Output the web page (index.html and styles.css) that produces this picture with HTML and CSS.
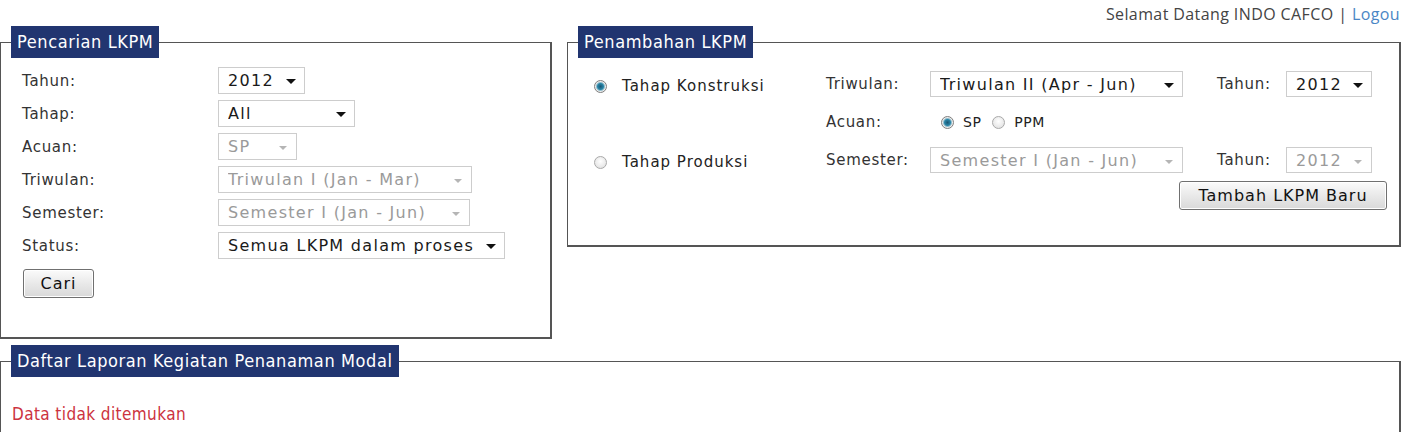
FILE: index.html
```html
<!DOCTYPE html>
<html lang="id">
<head>
    <meta charset="UTF-8">
    <title>LKPM</title>
    <link rel="stylesheet" href="styles.css">
</head>
<body>

    <div class="topbar">Selamat Datang INDO CAFCO | <a href="#" class="logout">Logou</a></div>

    <div class="panels">

        <!-- Pencarian -->
        <fieldset class="box box-search">
            <legend>Pencarian LKPM</legend>
            <div class="box-body">
                <div class="search-grid">
                    <span class="lbl">Tahun:</span>
                    <span class="dropdown w-87"><select><option>2012</option></select></span>

                    <span class="lbl">Tahap:</span>
                    <span class="dropdown w-137"><select><option>All</option></select></span>

                    <span class="lbl">Acuan:</span>
                    <span class="dropdown w-79 off"><select disabled><option>SP</option></select></span>

                    <span class="lbl">Triwulan:</span>
                    <span class="dropdown w-254 off"><select disabled><option>Triwulan I (Jan - Mar)</option></select></span>

                    <span class="lbl">Semester:</span>
                    <span class="dropdown w-252 off"><select disabled><option>Semester I (Jan - Jun)</option></select></span>

                    <span class="lbl">Status:</span>
                    <span class="dropdown w-287"><select><option>Semua LKPM dalam proses</option></select></span>
                </div>
                <button class="btn btn-cari">Cari</button>
            </div>
        </fieldset>

        <!-- Penambahan -->
        <fieldset class="box box-add">
            <legend>Penambahan LKPM</legend>
            <div class="box-body">
                <div class="add-grid">
                    <label class="stage"><input type="radio" name="tahap" checked> Tahap Konstruksi</label>
                    <span class="lbl">Triwulan:</span>
                    <span class="dropdown w-253"><select><option>Triwulan II (Apr - Jun)</option></select></span>
                    <span class="lbl lbl-year">Tahun:</span>
                    <span class="dropdown w-86"><select><option>2012</option></select></span>

                    <span></span>
                    <span class="lbl">Acuan:</span>
                    <span class="acuan">
                        <label><input type="radio" name="acuan" checked> SP</label>
                        <label><input type="radio" name="acuan"> PPM</label>
                    </span>
                    <span></span>
                    <span></span>

                    <label class="stage"><input type="radio" name="tahap"> Tahap Produksi</label>
                    <span class="lbl">Semester:</span>
                    <span class="dropdown w-253 off"><select disabled><option>Semester I (Jan - Jun)</option></select></span>
                    <span class="lbl lbl-year">Tahun:</span>
                    <span class="dropdown w-86 off"><select disabled><option>2012</option></select></span>
                </div>
                <div class="actions">
                    <button class="btn btn-add">Tambah LKPM Baru</button>
                </div>
            </div>
        </fieldset>

    </div>

    <!-- Daftar -->
    <fieldset class="box box-list">
        <legend>Daftar Laporan Kegiatan Penanaman Modal</legend>
        <div class="box-body">
            <p class="empty">Data tidak ditemukan</p>
        </div>
    </fieldset>

</body>
</html>
```

FILE: styles.css
```css
body {
    margin: 0;
    background-color: #fff;
    font-family: 'DejaVu Sans', Verdana, sans-serif;
    font-size: 15px;
    color: #333;
}

.topbar {
    height: 26px;
    width: 1400px;
    text-align: right;
    font-family: 'Open Sans', sans-serif;
    font-size: 16px;
    letter-spacing: 0.4px;
    line-height: 28px;
    color: #444;
    white-space: nowrap;
}

.logout {
    color: #4a86c5;
    text-decoration: none;
}

.panels {
    display: flex;
    gap: 15px;
    align-items: flex-start;
}

.box {
    margin: 0;
    padding: 0;
    border: 1px solid #555;
    border-right-width: 2px;
    border-bottom-width: 2px;
    box-sizing: border-box;
    min-width: 0;
}

.box legend {
    margin-left: 10px;
    padding: 0 6px;
    height: 32px;
    line-height: 32px;
    background-color: #213570;
    color: #fff;
    font-family: 'DejaVu Sans Condensed', 'DejaVu Sans', sans-serif;
    font-size: 18px;
    letter-spacing: 0.6px;
}

.box-search {
    width: 552px;
    height: 313px;
}

.box-add {
    width: 834px;
    height: 221px;
}

.box-list {
    width: 1401px;
    height: 140px;
    margin-top: 6px;
}

.lbl {
    font-size: 15px;
    letter-spacing: 0.7px;
    color: #333;
}

/* search form */
.box-search .box-body {
    padding: 9px 0 0 21px;
}

.search-grid {
    display: grid;
    grid-template-columns: 196px auto;
    grid-auto-rows: 27px;
    row-gap: 6px;
    align-items: center;
    justify-items: start;
}

/* dropdowns */
.dropdown {
    position: relative;
    display: inline-block;
    height: 27px;
}

.dropdown select {
    appearance: none;
    -webkit-appearance: none;
    width: 100%;
    height: 100%;
    margin: 0;
    padding: 0 0 0 9px;
    border: 1px solid #cdcdcd;
    border-radius: 0;
    background-color: #fff;
    font-family: 'DejaVu Sans', Verdana, sans-serif;
    font-size: 16px;
    letter-spacing: 1.3px;
    color: #1a1a1a;
    outline: none;
}

.dropdown select:disabled {
    color: #9a9a9a;
    background-color: #fff;
    opacity: 1;
}

.dropdown::after {
    content: "";
    position: absolute;
    right: 9px;
    top: 12px;
    border-left: 5px solid transparent;
    border-right: 5px solid transparent;
    border-top: 5px solid #111;
    pointer-events: none;
}

.dropdown.off::after {
    right: 10px;
    top: 13px;
    border-left-width: 4px;
    border-right-width: 4px;
    border-top: 4px solid #b5b5b5;
}

.w-79 { width: 79px; }
.w-86 { width: 86px; height: 26px; }
.w-87 { width: 87px; }
.w-137 { width: 137px; }
.w-252 { width: 252px; }
.w-253 { width: 253px; height: 26px; }
.w-254 { width: 254px; }
.w-287 { width: 287px; }

/* buttons */
.btn {
    font-family: 'DejaVu Sans', Verdana, sans-serif;
    font-size: 16px;
    letter-spacing: 1px;
    color: #111;
    background: linear-gradient(#fbfbfb, #e9e9e9 50%, #d9d9d9);
    border: 1px solid #707070;
    border-radius: 3px;
    box-shadow: inset 0 0 0 1px #fff;
    padding: 0;
    cursor: pointer;
}

.btn-cari {
    width: 71px;
    height: 29px;
    margin-top: 10px;
    margin-left: 1px;
}

.btn-add {
    width: 208px;
    height: 29px;
}

/* add form */
.box-add .box-body {
    padding: 13px 12px 0 26px;
}

.add-grid {
    display: grid;
    grid-template-columns: 232px 104px 253px 103px 86px;
    grid-template-rows: 26px 24px 26px;
    row-gap: 13px;
    align-items: center;
    justify-items: start;
}

.lbl-year {
    padding-left: 34px;
}

.stage {
    display: flex;
    align-items: center;
    gap: 15px;
    font-size: 15px;
    letter-spacing: 1px;
    color: #222;
    margin-top: 4px;
}

.acuan {
    display: flex;
    align-items: center;
    gap: 11px;
    padding-left: 11px;
    font-size: 14px;
    letter-spacing: 0.5px;
    color: #222;
}

.acuan label {
    display: flex;
    align-items: center;
    gap: 9px;
}

input[type="radio"] {
    appearance: none;
    -webkit-appearance: none;
    width: 13px;
    height: 13px;
    margin: 0;
    border: 1px solid #a9a9a9;
    border-radius: 50%;
    background: radial-gradient(circle at 50% 40%, #ffffff, #dcdcdc);
}

input[type="radio"]:checked {
    border-color: #7e7e7e;
    background: radial-gradient(circle, #1a5673 0, #2a86a8 3px, #8fbccc 4px, #ececec 5px);
}

.actions {
    display: flex;
    justify-content: flex-end;
    margin-top: 8px;
}

/* list */
.box-list .box-body {
    padding: 0 0 0 11px;
}

.empty {
    margin: 27px 0 0;
    font-family: 'DejaVu Sans Condensed', 'DejaVu Sans', sans-serif;
    font-size: 17px;
    letter-spacing: 0.4px;
    color: #cc3340;
}
```
